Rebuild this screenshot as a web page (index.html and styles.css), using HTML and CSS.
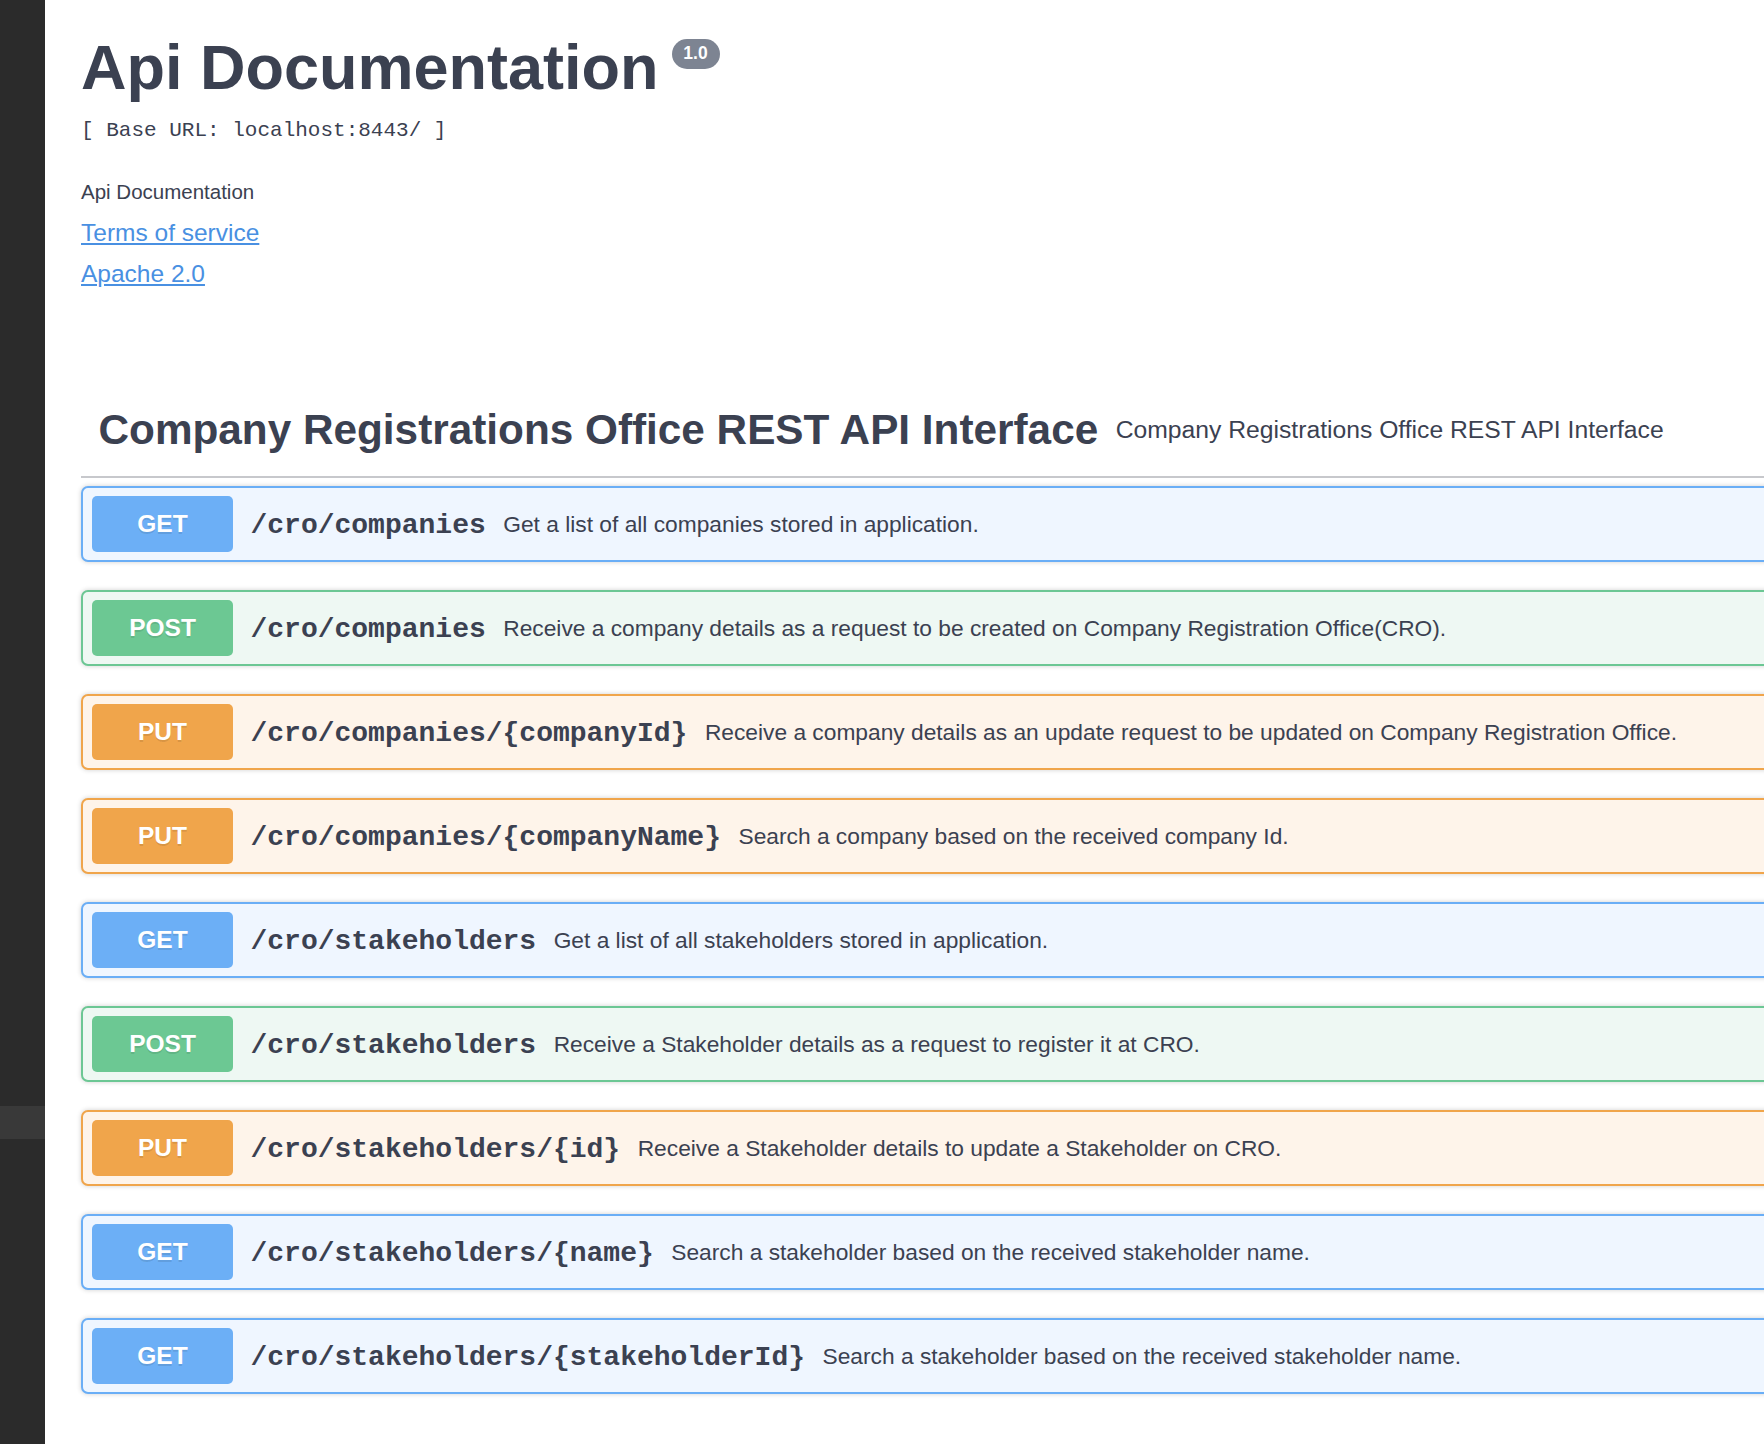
FILE: index.html
```html
<!DOCTYPE html>
<html lang="en">
<head>
<meta charset="utf-8">
<title>Api Documentation</title>
<link rel="stylesheet" href="styles.css">
</head>
<body>
<aside class="sidebar">
  <div class="sidebar-fill"></div>
  <div class="sidebar-strip"></div>
  <div class="sidebar-rest"></div>
</aside>
<main class="main">
  <section class="info">
    <h1 class="title">Api Documentation<span class="version">1.0</span></h1>
    <p class="base-url">[ Base URL: localhost:8443/ ]</p>
    <p class="desc">Api Documentation</p>
    <div class="link-row"><a class="link" href="#">Terms of service</a></div>
    <div class="link-row link-row-last"><a class="link" href="#">Apache 2.0</a></div>
  </section>

  <section class="tag">
    <h4 class="tag-title">
      <span class="tag-name">Company Registrations Office REST API Interface</span>
      <small class="tag-desc">Company Registrations Office REST API Interface</small>
    </h4>

    <div class="ops">
      <div class="op op-get">
        <span class="method">GET</span>
        <span class="path">/cro/companies</span>
        <span class="summary">Get a list of all companies stored in application.</span>
      </div>
      <div class="op op-post">
        <span class="method">POST</span>
        <span class="path">/cro/companies</span>
        <span class="summary">Receive a company details as a request to be created on Company Registration Office(CRO).</span>
      </div>
      <div class="op op-put">
        <span class="method">PUT</span>
        <span class="path">/cro/companies/{companyId}</span>
        <span class="summary">Receive a company details as an update request to be updated on Company Registration Office.</span>
      </div>
      <div class="op op-put">
        <span class="method">PUT</span>
        <span class="path">/cro/companies/{companyName}</span>
        <span class="summary">Search a company based on the received company Id.</span>
      </div>
      <div class="op op-get">
        <span class="method">GET</span>
        <span class="path">/cro/stakeholders</span>
        <span class="summary">Get a list of all stakeholders stored in application.</span>
      </div>
      <div class="op op-post">
        <span class="method">POST</span>
        <span class="path">/cro/stakeholders</span>
        <span class="summary">Receive a Stakeholder details as a request to register it at CRO.</span>
      </div>
      <div class="op op-put">
        <span class="method">PUT</span>
        <span class="path">/cro/stakeholders/{id}</span>
        <span class="summary">Receive a Stakeholder details to update a Stakeholder on CRO.</span>
      </div>
      <div class="op op-get">
        <span class="method">GET</span>
        <span class="path">/cro/stakeholders/{name}</span>
        <span class="summary">Search a stakeholder based on the received stakeholder name.</span>
      </div>
      <div class="op op-get">
        <span class="method">GET</span>
        <span class="path">/cro/stakeholders/{stakeholderId}</span>
        <span class="summary">Search a stakeholder based on the received stakeholder name.</span>
      </div>
    </div>
  </section>
</main>
</body>
</html>
```
FILE: styles.css
```css
html, body {
  margin: 0;
  padding: 0;
  background: #ffffff;
}

body {
  display: flex;
  height: 1444px;
  overflow: hidden;
  font-family: "Liberation Sans", Arial, Helvetica, sans-serif;
  color: #3b4151;
}

/* left dark strip */
.sidebar {
  flex: 0 0 45px;
  display: flex;
  flex-direction: column;
  background: #2b2b2b;
}
.sidebar-fill {
  height: 1106px;
  background: #2b2b2b;
}
.sidebar-strip {
  height: 33px;
  background: #393939;
}
.sidebar-rest {
  flex: 1;
  background: #2b2b2b;
}

.main {
  flex: 0 0 auto;
  width: 2400px;
  padding: 32px 0 0 36px;
  box-sizing: border-box;
}

/* info block */
.title {
  display: flex;
  align-items: flex-start;
  margin: 0;
  font-size: 63px;
  line-height: 70px;
  font-weight: 700;
  color: #3b4151;
}
.version {
  display: inline-block;
  width: 48px;
  height: 30px;
  margin: 7px 0 0 13px;
  border-radius: 15px;
  background: #7d8492;
  color: #ffffff;
  font-size: 17.5px;
  line-height: 28px;
  font-weight: 700;
  text-align: center;
}

.base-url {
  margin: 17px 0 0;
  font-family: "Liberation Mono", "Courier New", monospace;
  font-size: 21px;
  line-height: 24px;
  color: #3b4151;
}

.desc {
  margin: 37px 0 0;
  font-size: 20.5px;
  line-height: 24px;
  color: #3b4151;
}

.link-row {
  margin-top: 15px;
  font-size: 24.5px;
  line-height: 28px;
}
.link-row-last {
  margin-top: 13px;
}
.link {
  color: #4990e2;
  text-decoration: underline;
}

/* tag section */
.tag {
  margin-top: 100px;
}
.tag-title {
  display: flex;
  align-items: center;
  margin: 0;
  padding: 17.5px 20px 22.5px 17.5px;
  border-bottom: 2px solid #c7c8cc;
  font-weight: 700;
}
.tag-name {
  font-size: 42.3px;
  line-height: 48px;
  font-weight: 700;
  color: #3b4151;
}
.tag-desc {
  padding: 0 17.5px;
  font-size: 24.7px;
  line-height: 28px;
  font-weight: 400;
  color: #3b4151;
}

.ops {
  margin-top: 8px;
}

.op {
  display: flex;
  align-items: center;
  height: 76px;
  box-sizing: border-box;
  margin-bottom: 28px;
  padding: 8px 9px;
  border: 2px solid;
  border-radius: 7px;
  box-shadow: 0 0 5px rgba(0, 0, 0, 0.19);
}
.op-get {
  background: #eff6ff;
  border-color: #6aaef6;
}
.op-post {
  background: #eef8f3;
  border-color: #6cc794;
}
.op-put {
  background: #fef4ea;
  border-color: #f0a54b;
}

.method {
  flex: 0 0 141px;
  height: 56px;
  border-radius: 5px;
  color: #ffffff;
  font-size: 24.5px;
  font-weight: 700;
  line-height: 56px;
  text-align: center;
  text-shadow: 0 2px 0 rgba(0, 0, 0, 0.1);
}
.op-get .method { background: #6caff6; }
.op-post .method { background: #6cc893; }
.op-put .method { background: #f0a54b; }

.path {
  padding: 4px 17.5px 0;
  font-family: "Liberation Mono", "Courier New", monospace;
  font-size: 28px;
  font-weight: 700;
  line-height: 32px;
  color: #3b4151;
  white-space: nowrap;
}

.summary {
  font-size: 22.75px;
  line-height: 26px;
  color: #3b4151;
  white-space: nowrap;
}
```
